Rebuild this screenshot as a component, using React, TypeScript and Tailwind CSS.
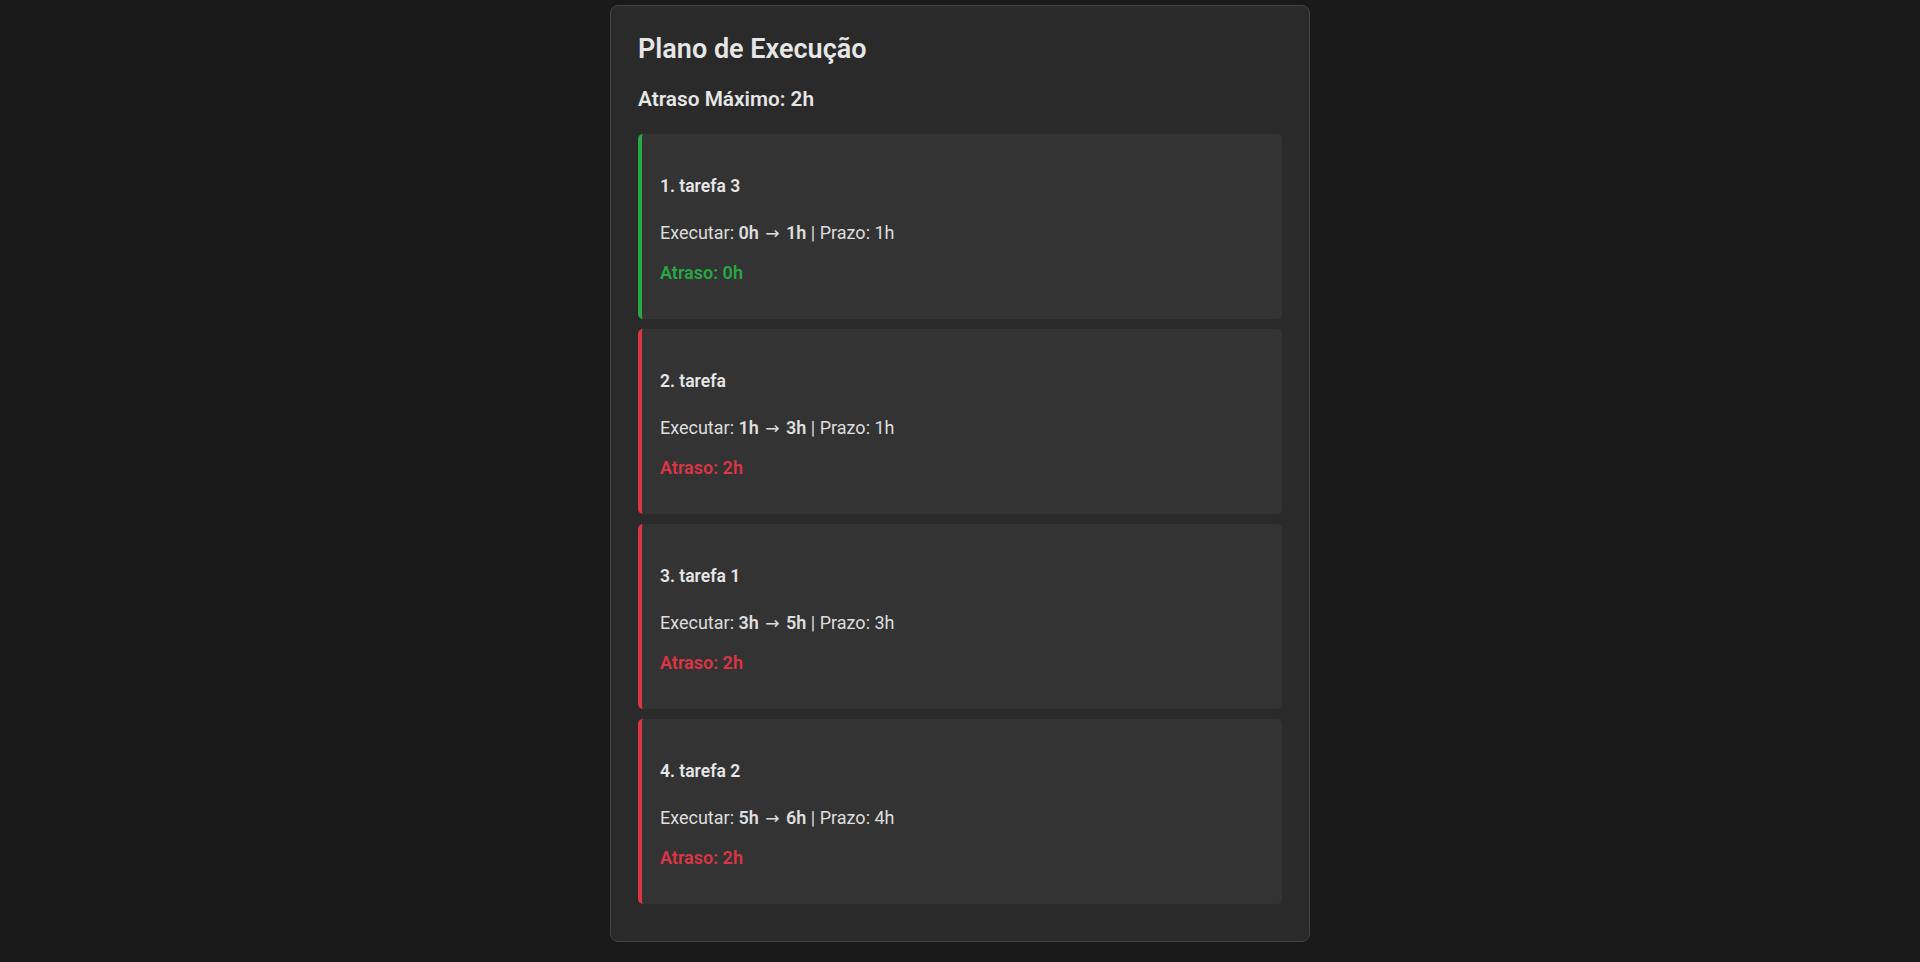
const tasks = [
  { n: 1, name: "tarefa 3", start: 0, end: 1, prazo: 1, atraso: 0 },
  { n: 2, name: "tarefa", start: 1, end: 3, prazo: 1, atraso: 2 },
  { n: 3, name: "tarefa 1", start: 3, end: 5, prazo: 3, atraso: 2 },
  { n: 4, name: "tarefa 2", start: 5, end: 6, prazo: 4, atraso: 2 },
];

export default function App() {
  return (
    <div
      className="min-h-screen bg-[#1a1a1a] flex justify-center text-[#e6e6e6]"
      style={{ fontFamily: 'Roboto, "Noto Sans", sans-serif' }}
    >
      <div className="mt-[5px] mb-[21px] w-[700px] self-start rounded-lg border border-[#444] bg-[#2a2a2a] px-[27px] pt-[26px] pb-[37px]">
        <h2 className="text-[27px] font-semibold leading-[34px]">Plano de Execução</h2>
        <h3 className="mt-[20px] text-[20.8px] font-semibold leading-[26px]">Atraso Máximo: 2h</h3>
        <div className="mt-[22px] flex flex-col gap-[10px]">
          {tasks.map((t) => {
            const ok = t.atraso === 0;
            return (
              <div
                key={t.n}
                className={`h-[185px] rounded-[5px] border-l-4 bg-[#333333] pl-[18px] pr-[18px] pt-[40px] ${
                  ok ? "border-[#28a745]" : "border-[#dc3545]"
                }`}
              >
                <div className="text-[17.5px] font-semibold leading-[24px]">
                  {t.n}. {t.name}
                </div>
                <div className="mt-[21px] text-[18px] leading-[27px] text-[#dedede]">
                  Executar: <b className="font-semibold">{t.start}h</b>{" "}
                  <span className="mx-[2px] text-[17px]" style={{ fontFamily: '"DejaVu Sans", sans-serif' }}>→</span>{" "}
                  <b className="font-semibold">{t.end}h</b> | Prazo: {t.prazo}h
                </div>
                <div
                  className={`mt-[12px] text-[18px] font-semibold leading-[27px] ${
                    ok ? "text-[#28a745]" : "text-[#dc3545]"
                  }`}
                >
                  Atraso: {t.atraso}h
                </div>
              </div>
            );
          })}
        </div>
      </div>
    </div>
  );
}
